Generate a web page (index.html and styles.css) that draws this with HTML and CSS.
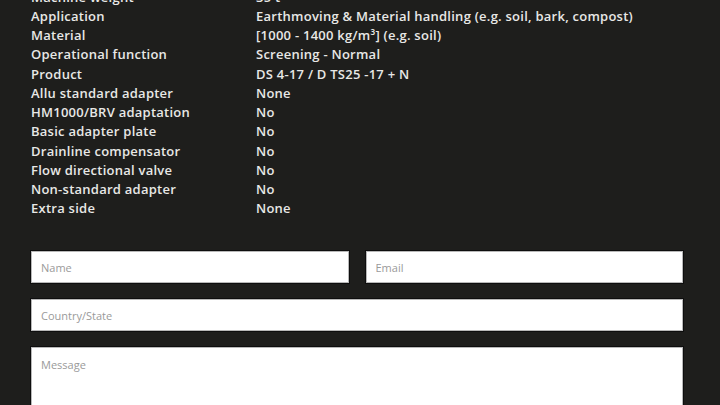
FILE: index.html
```html
<!DOCTYPE html>
<html>
<head>
<meta charset="utf-8">
<link rel="stylesheet" href="styles.css">
</head>
<body>
<div class="page">
  <dl class="specs">
    <div class="row"><dt>Machine weight</dt><dd>35 t</dd></div>
    <div class="row"><dt>Application</dt><dd>Earthmoving &amp; Material handling (e.g. soil, bark, compost)</dd></div>
    <div class="row"><dt>Material</dt><dd>[1000 - 1400 kg/m³] (e.g. soil)</dd></div>
    <div class="row"><dt>Operational function</dt><dd>Screening - Normal</dd></div>
    <div class="row"><dt>Product</dt><dd>DS 4-17 / D TS25 -17 + N</dd></div>
    <div class="row"><dt>Allu standard adapter</dt><dd>None</dd></div>
    <div class="row"><dt>HM1000/BRV adaptation</dt><dd>No</dd></div>
    <div class="row"><dt>Basic adapter plate</dt><dd>No</dd></div>
    <div class="row"><dt>Drainline compensator</dt><dd>No</dd></div>
    <div class="row"><dt>Flow directional valve</dt><dd>No</dd></div>
    <div class="row"><dt>Non-standard adapter</dt><dd>No</dd></div>
    <div class="row"><dt>Extra side</dt><dd>None</dd></div>
  </dl>
  <form class="form">
    <div class="pair">
      <input class="field" type="text" placeholder="Name">
      <input class="field" type="text" placeholder="Email">
    </div>
    <input class="field" type="text" placeholder="Country/State">
    <textarea class="field message" placeholder="Message"></textarea>
  </form>
</div>
</body>
</html>
```
FILE: styles.css
```css
html, body {
  margin: 0;
  padding: 0;
  background: #1e1e1c;
  overflow: hidden;
}
.page {
  width: 652px;
  margin: -13px 0 0 31px;
  font-family: "Open Sans", "Liberation Sans", sans-serif;
}
.specs {
  margin: 0;
  display: flex;
  flex-direction: column;
}
.row {
  display: grid;
  grid-template-columns: 225px 1fr;
  height: 19.25px;
  align-items: center;
}
.row dt, .row dd {
  margin: 0;
  color: #e8e8e6;
  font-size: 13px;
  font-weight: 600;
  letter-spacing: 0.25px;
  white-space: nowrap;
}
.form {
  margin-top: 33px;
  display: flex;
  flex-direction: column;
  gap: 16px;
}
.pair {
  display: grid;
  grid-template-columns: 1fr 1fr;
  gap: 17px;
}
.field {
  box-sizing: border-box;
  height: 32px;
  width: 100%;
  margin: 0;
  background: #fff;
  border: 1px solid #b8b8b8;
  box-shadow: 0 0 0 1px #0e0e0e;
  padding: 0 9px;
  font-family: "Open Sans", "Liberation Sans", sans-serif;
  font-size: 11px;
  color: #333;
  outline: none;
}
.field::placeholder {
  color: #9a9a9a;
}
.message {
  height: 80px;
  padding-top: 9px;
  resize: none;
}
```
